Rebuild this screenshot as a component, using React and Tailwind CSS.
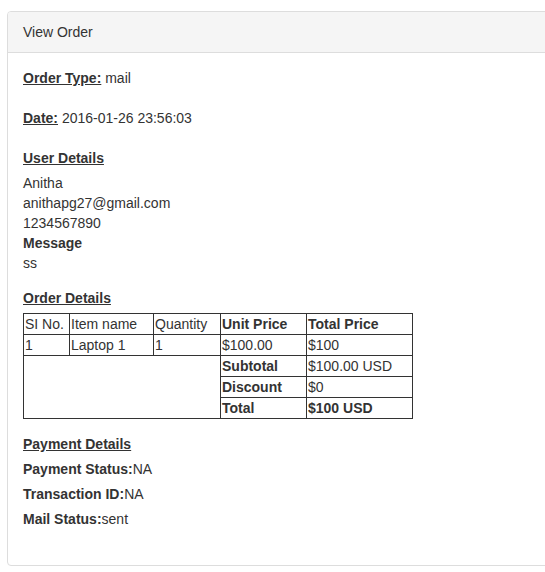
export default function App() {
  const cell = "border border-[#333] px-px py-0 text-left align-top leading-[20px]";
  return (
    <div className="w-[545px] h-[572px] overflow-hidden bg-white pt-[11px] pl-[7px] text-[14px] text-[#333]" style={{ fontFamily: '"Liberation Sans", Arial, sans-serif' }}>
      <div className="w-[600px] rounded-[4px] border border-[#ddd] bg-white">
        <div className="rounded-t-[3px] border-b border-[#ddd] bg-[#f5f5f5] px-[15px] py-[10px] leading-[20px]">View Order</div>
        <div className="px-[15px] pt-[15px] pb-[36px] leading-[20px]">
          <div><b className="underline">Order Type:</b> mail</div>
          <div className="mt-[20px]"><b className="underline">Date:</b> 2016-01-26 23:56:03</div>
          <div className="mt-[20px]"><b className="underline">User Details</b></div>
          <div className="mt-[5px]">Anitha</div>
          <div>anithapg27@gmail.com</div>
          <div>1234567890</div>
          <div className="font-bold">Message</div>
          <div>ss</div>
          <div className="mt-[15px]"><b className="underline">Order Details</b></div>
          <table className="mt-[5px] border-collapse border border-[#333]">
            <tbody>
              <tr>
                <td className={cell + " w-[46px]"}>SI No.</td>
                <td className={cell + " w-[84px]"}>Item name</td>
                <td className={cell + " w-[67px]"}>Quantity</td>
                <td className={cell + " w-[86px] font-bold"}>Unit Price</td>
                <td className={cell + " w-[106px] font-bold"}>Total Price</td>
              </tr>
              <tr>
                <td className={cell}>1</td>
                <td className={cell}>Laptop 1</td>
                <td className={cell}>1</td>
                <td className={cell}>$100.00</td>
                <td className={cell}>$100</td>
              </tr>
              <tr>
                <td className={cell} colSpan={3} rowSpan={3}></td>
                <td className={cell + " font-bold"}>Subtotal</td>
                <td className={cell}>$100.00 USD</td>
              </tr>
              <tr>
                <td className={cell + " font-bold"}>Discount</td>
                <td className={cell}>$0</td>
              </tr>
              <tr>
                <td className={cell + " font-bold"}>Total</td>
                <td className={cell + " font-bold"}>$100 USD</td>
              </tr>
            </tbody>
          </table>
          <div className="mt-[15px]"><b className="underline">Payment Details</b></div>
          <div className="mt-[5px]"><b>Payment Status:</b>NA</div>
          <div className="mt-[5px]"><b>Transaction ID:</b>NA</div>
          <div className="mt-[5px]"><b>Mail Status:</b>sent</div>
        </div>
      </div>
    </div>
  );
}
